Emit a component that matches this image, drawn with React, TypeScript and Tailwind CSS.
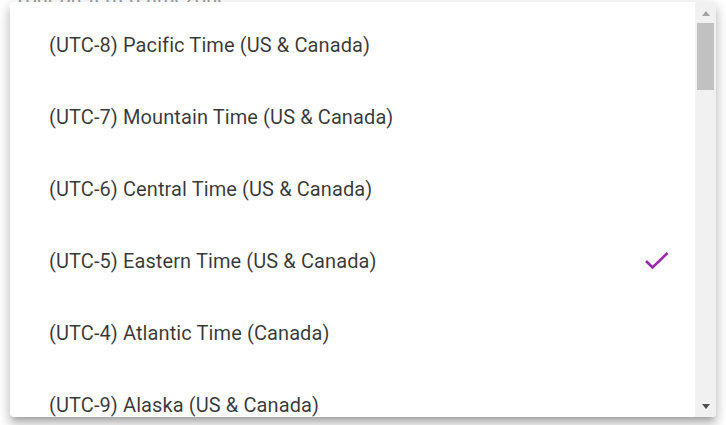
const zones = [
  '(UTC-8) Pacific Time (US & Canada)',
  '(UTC-7) Mountain Time (US & Canada)',
  '(UTC-6) Central Time (US & Canada)',
  '(UTC-5) Eastern Time (US & Canada)',
  '(UTC-4) Atlantic Time (Canada)',
  '(UTC-9) Alaska (US & Canada)',
];

const selected = '(UTC-5) Eastern Time (US & Canada)';

function Check() {
  return (
    <svg width="26" height="20" viewBox="0 0 26 20" fill="none">
      <polyline
        points="2,10 8.5,16.5 23.5,2"
        stroke="#9c27b0"
        strokeWidth="2.6"
        strokeLinecap="butt"
        strokeLinejoin="miter"
      />
    </svg>
  );
}

export default function App() {
  return (
    <div className="relative h-[425px] w-[726px] overflow-hidden bg-white font-['Roboto',sans-serif]">
      <div className="absolute left-[14px] top-[-17px] text-[20px] text-[#9e9e9e]">
        Your preferred timezone
      </div>

      <div className="absolute left-[10px] top-[2px] flex h-[415px] w-[706px] overflow-hidden rounded bg-white shadow-[0_5px_5px_-3px_rgba(0,0,0,0.2),0_8px_10px_1px_rgba(0,0,0,0.14),0_3px_14px_2px_rgba(0,0,0,0.12)]">
        <ul className="flex-1 pt-[7px]">
          {zones.map((z) => (
            <li
              key={z}
              className="flex h-[72px] items-center justify-between pl-[39px] pr-[25px] text-[20px] tracking-[0.1px] text-[rgba(0,0,0,0.78)]"
            >
              <span>{z}</span>
              {z === selected && <Check />}
            </li>
          ))}
        </ul>

        <div className="flex w-[21px] flex-col items-center bg-[#f1f1f1]">
          <div className="flex h-[21px] items-center justify-center pt-[1px]">
            <div className="h-0 w-0 border-x-[4.5px] border-b-[5px] border-x-transparent border-b-[#a3a3a3]" />
          </div>
          <div className="h-[67px] w-[17px] bg-[#c1c1c1]" />
          <div className="flex-1" />
          <div className="flex h-[21px] items-center justify-center">
            <div className="h-0 w-0 border-x-[4.5px] border-t-[5px] border-x-transparent border-t-[#505050]" />
          </div>
        </div>
      </div>
    </div>
  );
}
